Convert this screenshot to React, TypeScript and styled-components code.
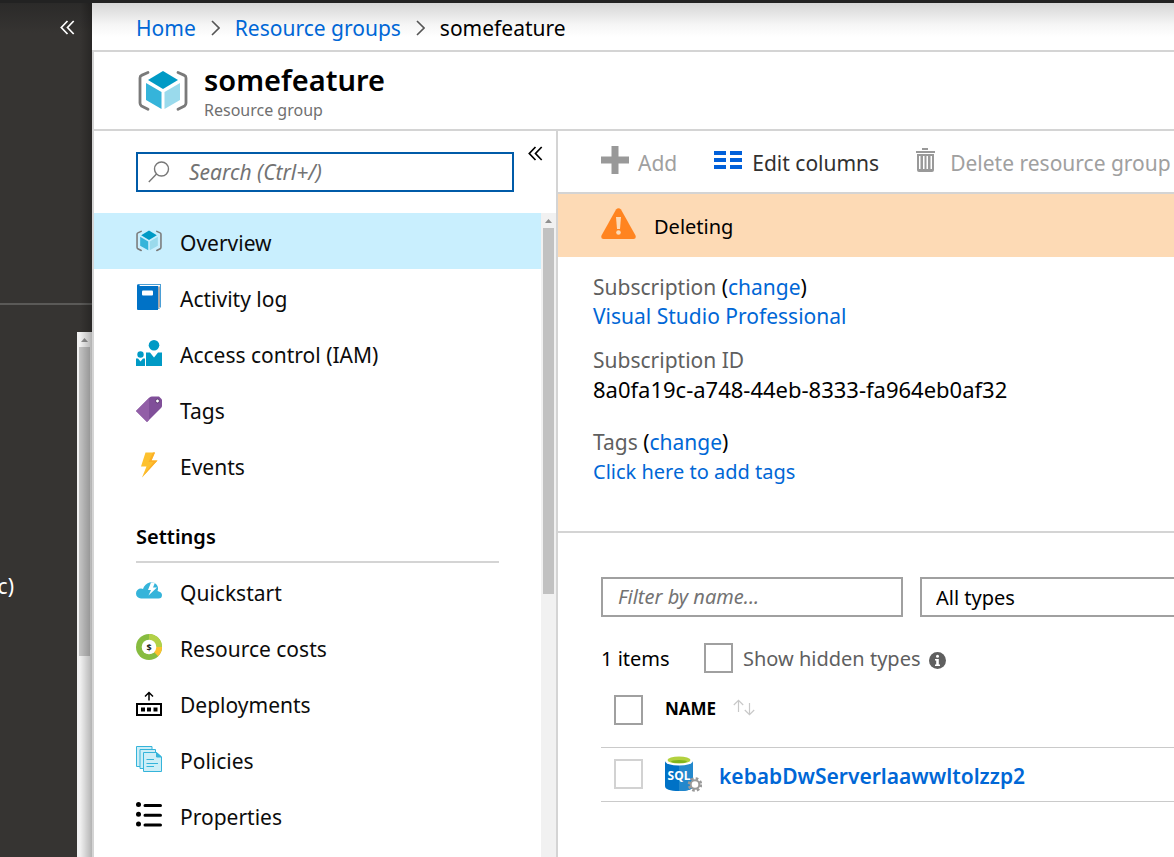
import React from 'react';
import styled, { createGlobalStyle, css } from 'styled-components';

const Global = createGlobalStyle`
  *, *::before, *::after { box-sizing: border-box; }
  html, body { margin: 0; padding: 0; }
  body {
    font-family: "Noto Sans", "Open Sans", sans-serif;
    font-size: 21px;
    line-height: 28px;
    color: #000;
    background: #fff;
    overflow-x: hidden;
  }
  button, input, select { font: inherit; color: inherit; }
  svg { display: block; flex: none; }
`;

const blue = '#0067d6';
const line = '#d4d4d4';

const Page = styled.div`
  display: flex;
  flex-direction: column;
  min-height: 100vh;
  border-top: 3px solid #222;
  overflow: hidden;
`;

const Shell = styled.div`
  display: flex;
  flex: 1;
`;

const Rail = styled.aside`
  position: relative;
  display: flex;
  flex-direction: column;
  flex: none;
  width: 92px;
  background: linear-gradient(#2b2a29, #363432 30px);
  color: #fff;
  &::after {
    content: '';
    position: absolute;
    inset: 0 0 0 auto;
    width: 12px;
    background: linear-gradient(to right, transparent, rgba(0, 0, 0, 0.26));
    pointer-events: none;
  }
`;

const RailTop = styled.div`
  display: flex;
  justify-content: flex-end;
  align-items: flex-start;
  height: 302px;
  padding: 17px 17px 0 0;
  border-bottom: 2px solid #5b5a58;
`;

const RailBody = styled.div`
  display: flex;
  flex: 1;
  justify-content: space-between;
  padding-top: 27px;
`;

const RailItem = styled.a`
  display: flex;
  justify-content: flex-end;
  width: 14px;
  margin-top: 240px;
  height: 28px;
  overflow: hidden;
  white-space: nowrap;
  color: #fff;
  text-decoration: none;
`;

const IconButton = styled.button`
  display: flex;
  padding: 0;
  border: 0;
  background: none;
  cursor: pointer;
`;

const Track = styled.div`
  display: flex;
  flex-direction: column;
  flex: none;
  width: 15px;
  background: #f1f1f1;
`;

const TrackArrow = styled.div`
  display: flex;
  align-items: center;
  justify-content: center;
  height: 15px;
`;

const Thumb = styled.div<{ $length: number }>`
  height: ${p => p.$length}px;
  margin: 0 2px;
  background: #c1c1c1;
`;

const Main = styled.main`
  display: flex;
  flex-direction: column;
  flex: 1;
  min-width: 0;
`;

const Crumbs = styled.nav`
  display: flex;
  align-items: center;
  gap: 15px;
  height: 49px;
  padding: 2px 44px 0;
  border-bottom: 2px solid ${line};
  background: linear-gradient(#d6d6d6, #f6f6f6 22px, #fff 34px);
  white-space: nowrap;
`;

const Link = styled.a`
  color: ${blue};
  text-decoration: none;
`;

const Blade = styled.section`
  display: flex;
  flex-direction: column;
  flex: 1;
  border-left: 2px solid ${line};
`;

const BladeHeader = styled.header`
  display: flex;
  align-items: center;
  gap: 16px;
  height: 79px;
  padding-left: 44px;
  border-bottom: 2px solid ${line};
`;

const Heading = styled.div`
  padding-top: 2px;
`;

const Title = styled.h1`
  margin: 0;
  font-size: 29px;
  line-height: 36px;
  font-weight: 600;
`;

const Subtitle = styled.p`
  margin: 0;
  font-size: 16px;
  line-height: 24px;
  color: #707070;
`;

const BladeBody = styled.div`
  display: flex;
  flex: 1;
`;

const Menu = styled.aside`
  display: flex;
  flex-direction: column;
  flex: none;
  width: 464px;
  border-right: 2px solid ${line};
`;

const MenuTop = styled.div`
  display: flex;
  align-items: flex-start;
  gap: 14px;
  height: 82px;
  padding: 21px 13px 0 42px;
  & > button { margin-top: -6px; }
`;

const SearchBox = styled.label`
  display: flex;
  align-items: center;
  gap: 19px;
  flex: 1;
  height: 40px;
  padding: 0 10px;
  border: 2px solid #005ba8;
`;

const placeholderStyle = css`
  &::placeholder {
    color: #737373;
    opacity: 1;
    font-style: italic;
  }
`;

const SearchInput = styled.input`
  flex: 1;
  min-width: 0;
  padding: 0;
  border: 0;
  outline: 0;
  font-size: 21px;
  background: none;
  ${placeholderStyle}
`;

const MenuScroll = styled.div`
  display: flex;
  flex: 1;
`;

const MenuList = styled.nav`
  flex: 1;
`;

const MenuItem = styled.a<{ $active?: boolean }>`
  display: flex;
  align-items: center;
  gap: 18px;
  height: 56px;
  padding: 4px 0 0 42px;
  color: #0c0c0c;
  text-decoration: none;
  background: ${p => (p.$active ? '#c9effe' : 'transparent')};
  svg { margin-bottom: 4px; }
`;

const MenuHeading = styled.h2`
  display: flex;
  align-items: center;
  height: 70px;
  margin: 0 42px;
  padding-top: 19px;
  border-bottom: 2px solid ${line};
  font-size: 20px;
  font-weight: 600;
`;

const Content = styled.div`
  flex: 1;
  min-width: 0;
`;

const Toolbar = styled.div`
  display: flex;
  align-items: center;
  gap: 37px;
  height: 63px;
  padding-left: 43px;
  border-bottom: 2px solid ${line};
  overflow: hidden;
`;

const Command = styled.button<{ $gap: number }>`
  display: flex;
  align-items: center;
  gap: ${p => p.$gap}px;
  flex: none;
  padding: 3px 0 0;
  border: 0;
  background: none;
  white-space: nowrap;
  color: #323130;
  cursor: pointer;
  &:disabled { color: #a0a0a0; cursor: default; }
  svg { margin-bottom: 6px; }
`;

const Banner = styled.div`
  display: flex;
  align-items: center;
  gap: 18px;
  height: 63px;
  padding: 2px 0 0 43px;
  background: #fddab5;
  font-size: 20px;
  svg { margin-bottom: 6px; }
`;

const Essentials = styled.dl`
  display: flex;
  flex-direction: column;
  gap: 15px;
  height: 276px;
  margin: 0;
  padding: 16px 0 0 35px;
  border-bottom: 2px solid ${line};
  dt { line-height: 29px; color: #5f5f5f; }
  dt span { color: #000; }
  dd { margin: 0; line-height: 29px; }
  & > div:last-child { padding-top: 9px; }
`;

const Identifier = styled.dd`
  font-size: 22px;
`;

const SmallLink = styled(Link)`
  font-size: 20px;
`;

const Resources = styled.section`
  padding: 44px 0 0 43px;
  overflow: hidden;
`;

const Filters = styled.div`
  display: flex;
  gap: 17px;
`;

const fieldStyle = css`
  flex: none;
  width: 302px;
  height: 40px;
  border: 2px solid #a0a0a0;
  border-radius: 0;
  background: #fff;
  font-size: 20px;
`;

const FilterInput = styled.input`
  ${fieldStyle}
  padding: 0 15px 2px;
  ${placeholderStyle}
`;

const TypeSelect = styled.select`
  ${fieldStyle}
  padding: 2px 14px 0;
  appearance: none;
`;

const Summary = styled.div`
  display: flex;
  align-items: center;
  height: 30px;
  margin-top: 26px;
  font-size: 20px;
  & > svg { margin-top: 5px; }
`;

const Count = styled.span`
  flex: none;
  width: 103px;
  padding-top: 2px;
`;

const CheckLabel = styled.label`
  display: flex;
  align-items: center;
  gap: 10px;
  margin-right: 8px;
  color: #5f5f5f;
  span { padding-top: 2px; }
`;

const Check = styled.input<{ $faint?: boolean }>`
  appearance: none;
  display: block;
  flex: none;
  width: 29px;
  height: 30px;
  margin: 0;
  border: 2px solid ${p => (p.$faint ? '#d2d2d2' : '#a0a0a0')};
  background: #fff;
`;

const Table = styled.table`
  width: 100%;
  margin-top: 11px;
  border-collapse: collapse;
  tr { border-bottom: 1px solid #cacaca; }
  th, td { padding: 0; text-align: left; }
`;

const HeadCell = styled.th`
  height: 63px;
  vertical-align: top;
  font-size: 17px;
  font-weight: 700;
`;

const BodyCell = styled.td<{ $wide?: boolean }>`
  width: ${p => (p.$wide ? '100%' : 'auto')};
`;

const SortButton = styled.button`
  display: flex;
  align-items: center;
  gap: 17px;
  height: 50px;
  padding: 0;
  border: 0;
  background: none;
  font-weight: 700;
  svg { margin-bottom: 3px; }
`;

const CheckCell = styled.div<{ $top: number }>`
  width: 64px;
  padding: ${p => p.$top}px 0 0 13px;
`;

const NameCell = styled.div`
  display: flex;
  align-items: center;
  gap: 17px;
  height: 53px;
  font-weight: 600;
  a { padding-top: 3px; }
`;

const Chevrons = ({ color }: { color: string }) => (
  <svg width="15" height="15" viewBox="0 0 15 15" fill="none" stroke={color} strokeWidth="1.7" aria-hidden="true">
    <path d="M7.5 1 1.3 7.5 7.5 14M13.7 1 7.5 7.5 13.7 14" />
  </svg>
);

const CrumbArrow = () => (
  <svg width="9" height="16" viewBox="0 0 9 16" fill="none" stroke="#555" strokeWidth="1.6" aria-hidden="true">
    <path d="M1 1 8 8 1 15" />
  </svg>
);

const UpArrow = () => (
  <svg width="7" height="4" viewBox="0 0 7 4" aria-hidden="true">
    <path d="M0 4 3.5 0 7 4Z" fill="#8f8f8f" />
  </svg>
);

const CubeIcon = ({ size, small }: { size: number; small?: boolean }) => (
  <svg width={size} height={small ? 22 : 42} viewBox="0 0 50 42" aria-hidden="true">
    <g fill="none" stroke="#7a7a7a" strokeWidth={small ? 3 : 2.8} strokeLinecap="round" strokeLinejoin="round">
      <path d="M10 2.5 3.5 5.4Q2 6 2 8V33Q2 35 3.5 36L10 39.3" />
      <path d="M40 2.5 46.5 5.4Q48 6 48 8V33Q48 35 46.5 36L40 39.3" />
    </g>
    <path d="M25 1 40 10 25 19 10 10Z" fill="#009ac5" />
    <path d="M8 13 23.5 22V39L8 30Z" fill="#35b4da" />
    <path d="M42 13 26.5 22V39L42 30Z" fill="#9adaec" />
  </svg>
);

const SearchIcon = () => (
  <svg width="22" height="22" viewBox="0 0 22 22" fill="none" stroke="#777" strokeWidth="1.4" aria-hidden="true">
    <circle cx="13.5" cy="8" r="7" />
    <path d="M8.500 13 .8 21" />
  </svg>
);

const LogIcon = () => (
  <svg width="26" height="26" viewBox="0 0 26 26" aria-hidden="true">
    <path d="M3 0H25V23L23 25H3Z" fill="#4b9fd6" />
    <path d="M3 1H24V24H4Z" fill="#fff" />
    <path d="M21 2.5H24V23L22 25Z" fill="#aaa" />
    <path d="M1 1.5Q1 0 2.5 0L4 2H22V26H2Q1 26 1 25Z" fill="#0072c6" />
    <rect x="6" y="6.5" width="11" height="5" rx="1" fill="#fff" />
  </svg>
);

const PeopleIcon = () => (
  <svg width="26" height="26" viewBox="0 0 26 26" fill="#009ac5" aria-hidden="true">
    <circle cx="18" cy="5.3" r="5.3" />
    <circle cx="4.5" cy="14.500" r="3.2" />
    <path d="M10 12.5H14L18 17.5 22 12.5H26V26H10Z" />
    <path d="M0 18.500H2L4.500 21.500 7 18.500H9V26H0Z" />
  </svg>
);

const TagIcon = () => (
  <svg width="26" height="26" viewBox="0 0 26 26" aria-hidden="true">
    <path d="M13.5 1.5Q14.5 .5 16 .5H23L26 3.5V10Q26 11 25 12L11 26 0 15Z" fill="#804f99" />
    <path d="M0 15 13 2V24L11 26Z" fill="#925fa7" />
    <circle cx="21.5" cy="5" r="1.9" fill="#fff" stroke="#4d2a63" strokeWidth=".8" />
  </svg>
);

const BoltIcon = () => (
  <svg width="26" height="26" viewBox="0 0 26 26" aria-hidden="true">
    <path d="M9.5 .5H19L15.5 8.5H21.5L6 25.5 10.5 14.5H5Z" fill="#fdc12e" />
    <path d="M17 .5H19L15.5 8.5H21.500L6 25.500 17.500 10H12.500Z" fill="#fcae27" />
  </svg>
);

const CloudIcon = () => (
  <svg width="26" height="26" viewBox="0 0 26 26" aria-hidden="true">
    <path d="M5 20.5A5 5 0 0 1 5 10.5Q6.5 10.5 7 11Q8.5 6 13.5 4.5Q18 3.5 20.5 6.5Q23 9.5 21.5 13Q26 14 26 17Q26 20.5 22.5 20.5Z" fill="#35b4da" />
    <path d="M15 4.5H19L17 9.5H21L12.5 17.5 15 12H12Z" fill="#fff" />
  </svg>
);

const CostIcon = () => (
  <svg width="26" height="26" viewBox="0 0 26 26" aria-hidden="true">
    <circle cx="13" cy="13" r="13" fill="#87bc40" />
    <path d="M13 0A13 13 0 0 1 26 13H13Z" fill="#b3d147" />
    <path d="M26 13A13 13 0 0 1 22.2 22.2L13 13Z" fill="#fdc12e" />
    <circle cx="13" cy="13" r="7.3" fill="#fff" />
    <text x="13" y="16.5" fontSize="9" fontWeight="700" textAnchor="middle" fill="#222">$</text>
  </svg>
);

const DeployIcon = () => (
  <svg width="26" height="26" viewBox="0 0 26 26" aria-hidden="true">
    <path d="M1 14H25V25H1Z" fill="none" stroke="#000" strokeWidth="2" />
    <path d="M5 17.5H9V21.5H5ZM11 17.5H15V21.5H11ZM17.5 17.5H21.5V21.5H17.5Z" />
    <path d="M13 10.5V3M9 6.5 13 2.5 17 6.5" fill="none" stroke="#000" strokeWidth="1.5" />
  </svg>
);

const PolicyIcon = () => (
  <svg width="26" height="26" viewBox="0 0 26 26" fill="#cdeef7" stroke="#35b4da" aria-hidden="true">
    <path d="M.5 .5H16V20.5H.5Z" />
    <path d="M4 3.5H19.5V22.5H4Z" />
    <path d="M7.5 6.5H20.5L25.5 11V25.5H7.5Z" />
    <path d="M20.5 6.5V11H25.5Z" fill="#35b4da" />
    <path d="M10.5 13.5H18M10.5 17.5H22M10.5 20.5H18" />
  </svg>
);

const PropertiesIcon = () => (
  <svg width="26" height="26" viewBox="0 0 26 26" aria-hidden="true">
    <g stroke="#000" strokeWidth="3" strokeLinecap="round">
      <path d="M9 3.5H24.5M9 13.2H24.5M9 23H24.5" />
    </g>
    <circle cx="2.5" cy="2.5" r="2.5" />
    <circle cx="2.5" cy="12.3" r="2.5" />
    <circle cx="2.5" cy="22" r="2.5" />
  </svg>
);

const PlusIcon = () => (
  <svg width="28" height="28" viewBox="0 0 28 28" aria-hidden="true">
    <path d="M10.5 0H17.5V10.5H28V17.5H17.5V28H10.5V17.5H0V10.5H10.5Z" fill="#999" />
  </svg>
);

const ColumnsIcon = () => (
  <svg width="28" height="20" viewBox="0 0 28 20" fill="#0060da" aria-hidden="true">
    <path d="M0 1H12V5H0ZM16 1H28V5H16ZM0 8H12V12H0ZM16 8H28V12H16ZM0 15H12V19H0ZM16 15H28V19H16Z" />
  </svg>
);

const TrashIcon = () => (
  <svg width="19" height="24" viewBox="0 0 19 24" fill="#999" aria-hidden="true">
    <path d="M6 0H12V2H6ZM0 3H19V5H0Z" />
    <path fillRule="evenodd" d="M1 6H18V22Q18 24 16 24H3Q1 24 1 22ZM3 8V21H4.5V8ZM7 8V21H8.5V8ZM10.5 8V21H12V8ZM14.5 8V21H16V8Z" />
  </svg>
);

const WarningIcon = () => (
  <svg width="35" height="31" viewBox="0 0 35 31" aria-hidden="true">
    <path d="M15 1.5Q17.5-1.2 20 1.5L34.5 27.5Q35.5 31 32.5 31H2.5Q-.5 31 .5 27.5Z" fill="#ff8420" />
    <path d="M15 9H20L19 21H16Z" fill="#fddab5" />
    <circle cx="17.5" cy="24.5" r="2.3" fill="#fddab5" />
  </svg>
);

const InfoIcon = () => (
  <svg width="17" height="17" viewBox="0 0 17 17" aria-hidden="true">
    <circle cx="8.5" cy="8.5" r="8.5" fill="#5f5f5f" />
    <circle cx="8.5" cy="4.2" r="1.5" fill="#fff" />
    <path d="M6 7H9.8V12.5H11V14H6V12.5H7.2V8.5H6Z" fill="#fff" />
  </svg>
);

const SortIcon = () => (
  <svg width="22" height="17" viewBox="0 0 22 17" fill="none" stroke="#c8c8c8" strokeWidth="1.2" aria-hidden="true">
    <path d="M5.5 13V1.5M.8 6 5.5 1.3 10.2 6M16.5 4V15.500M11.8 11 16.5 15.7 21.2 11" />
  </svg>
);

const SqlIcon = () => (
  <svg width="37" height="36" viewBox="0 0 37 36" aria-hidden="true">
    <path d="M0 5V30Q0 35 14 35Q28 35 28 30V5Z" fill="#0072c6" />
    <path d="M14 5H28V30Q28 35 14 35Z" fill="#2388cc" />
    <ellipse cx="14" cy="4.8" rx="14" ry="4.8" fill="#fff" />
    <ellipse cx="14" cy="4" rx="11.5" ry="3.6" fill="#b3d13f" />
    <ellipse cx="14" cy="5.6" rx="8" ry="1.5" fill="#7fb41c" />
    <text x="14" y="24" fontSize="12" fontWeight="700" textAnchor="middle" fill="#fff">SQL</text>
    <circle cx="30" cy="28.5" r="6" fill="none" stroke="#999" strokeWidth="2.600" strokeDasharray="2.6 2.110" />
    <circle cx="30" cy="28.5" r="4.3" fill="#fff" stroke="#999" strokeWidth="2" />
  </svg>
);

const general = [
  { label: 'Overview', icon: <CubeIcon size={26} small />, active: true },
  { label: 'Activity log', icon: <LogIcon /> },
  { label: 'Access control (IAM)', icon: <PeopleIcon /> },
  { label: 'Tags', icon: <TagIcon /> },
  { label: 'Events', icon: <BoltIcon /> },
];

const settings = [
  { label: 'Quickstart', icon: <CloudIcon /> },
  { label: 'Resource costs', icon: <CostIcon /> },
  { label: 'Deployments', icon: <DeployIcon /> },
  { label: 'Policies', icon: <PolicyIcon /> },
  { label: 'Properties', icon: <PropertiesIcon /> },
];

const Scrollbar = ({ length }: { length: number }) => (
  <Track aria-hidden="true">
    <TrackArrow><UpArrow /></TrackArrow>
    <Thumb $length={length} />
  </Track>
);

export default function App() {
  return (
    <>
      <Global />
      <Page>
        <Shell>
          <Rail>
            <RailTop>
              <IconButton aria-label="Collapse portal menu"><Chevrons color="#fff" /></IconButton>
            </RailTop>
            <RailBody>
              <RailItem href="#">c)</RailItem>
              <Scrollbar length={309} />
            </RailBody>
          </Rail>
          <Main>
            <Crumbs aria-label="Breadcrumb">
              <Link href="#">Home</Link>
              <CrumbArrow />
              <Link href="#">Resource groups</Link>
              <CrumbArrow />
              <span>somefeature</span>
            </Crumbs>
            <Blade>
              <BladeHeader>
                <CubeIcon size={50} />
                <Heading>
                  <Title>somefeature</Title>
                  <Subtitle>Resource group</Subtitle>
                </Heading>
              </BladeHeader>
              <BladeBody>
                <Menu>
                  <MenuTop>
                    <SearchBox>
                      <SearchIcon />
                      <SearchInput type="text" placeholder="Search (Ctrl+/)" aria-label="Search menu" />
                    </SearchBox>
                    <IconButton aria-label="Collapse menu"><Chevrons color="#000" /></IconButton>
                  </MenuTop>
                  <MenuScroll>
                    <MenuList aria-label="Resource menu">
                      {general.map(item => (
                        <MenuItem key={item.label} href="#" $active={item.active}>
                          {item.icon}
                          {item.label}
                        </MenuItem>
                      ))}
                      <MenuHeading>Settings</MenuHeading>
                      {settings.map(item => (
                        <MenuItem key={item.label} href="#">
                          {item.icon}
                          {item.label}
                        </MenuItem>
                      ))}
                    </MenuList>
                    <Scrollbar length={366} />
                  </MenuScroll>
                </Menu>
                <Content>
                  <Toolbar>
                    <Command $gap={9} disabled><PlusIcon />Add</Command>
                    <Command $gap={10}><ColumnsIcon />Edit columns</Command>
                    <Command $gap={15} disabled><TrashIcon />Delete resource group</Command>
                  </Toolbar>
                  <Banner role="status"><WarningIcon />Deleting</Banner>
                  <Essentials>
                    <div>
                      <dt>Subscription <span>(<Link href="#">change</Link>)</span></dt>
                      <dd><Link href="#">Visual Studio Professional</Link></dd>
                    </div>
                    <div>
                      <dt>Subscription ID</dt>
                      <Identifier>8a0fa19c-a748-44eb-8333-fa964eb0af32</Identifier>
                    </div>
                    <div>
                      <dt>Tags <span>(<Link href="#">change</Link>)</span></dt>
                      <dd><SmallLink href="#">Click here to add tags</SmallLink></dd>
                    </div>
                  </Essentials>
                  <Resources>
                    <Filters>
                      <FilterInput type="text" placeholder="Filter by name..." aria-label="Filter by name" />
                      <TypeSelect aria-label="Resource type"><option>All types</option></TypeSelect>
                    </Filters>
                    <Summary>
                      <Count>1 items</Count>
                      <CheckLabel><Check type="checkbox" /><span>Show hidden types</span></CheckLabel>
                      <InfoIcon />
                    </Summary>
                    <Table>
                      <thead>
                        <tr>
                          <HeadCell><CheckCell $top={11}><Check type="checkbox" aria-label="Select all" /></CheckCell></HeadCell>
                          <HeadCell><SortButton>NAME<SortIcon /></SortButton></HeadCell>
                        </tr>
                      </thead>
                      <tbody>
                        <tr>
                          <BodyCell><CheckCell $top={0}><Check type="checkbox" $faint aria-label="Select kebabDwServerlaawwltolzzp2" /></CheckCell></BodyCell>
                          <BodyCell $wide><NameCell><SqlIcon /><Link href="#">kebabDwServerlaawwltolzzp2</Link></NameCell></BodyCell>
                        </tr>
                      </tbody>
                    </Table>
                  </Resources>
                </Content>
              </BladeBody>
            </Blade>
          </Main>
        </Shell>
      </Page>
    </>
  );
}
